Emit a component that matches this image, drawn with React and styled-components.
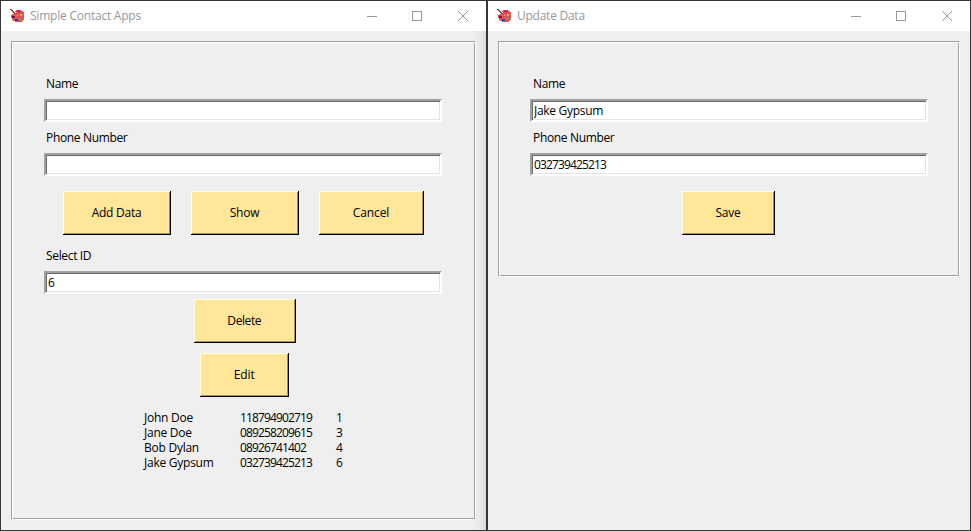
import React from "react";
import styled, { createGlobalStyle } from "styled-components";

const GlobalStyle = createGlobalStyle`
  *, *::before, *::after { box-sizing: border-box; }
  body { margin: 0; background: #353535; overflow: hidden; }
  body, input, button { font: 12px/16px "Open Sans", "Noto Sans", sans-serif; color: #000; }
`;

const Desktop = styled.main`
  width: 971px;
  height: 531px;
  padding: 1px;
  display: flex;
  gap: 2px;
  background: #353537;
`;

const Window = styled.section`
  width: ${(p) => p.$width}px;
  height: 529px;
  background: linear-gradient(to left, ${(p) => (p.$shaded ? "#d9d9d9, #e7e7e7 5px, #efefef 12px" : "#efefef, #efefef")});
`;

const TitleBar = styled.header`
  height: 30px;
  display: flex;
  align-items: center;
  padding-left: 8px;
  background: #fff;
`;

const Title = styled.h1`
  margin: 0 auto 0 5px;
  font-size: 12px;
  font-weight: 400;
  line-height: 16px;
  letter-spacing: ${(p) => p.$spacing}px;
  color: #999;
  white-space: nowrap;
`;

const Controls = styled.svg`
  display: block;
  width: 104px;
  height: 12px;
  margin-right: 16px;
`;

const Frame = styled.div`
  width: ${(p) => p.$width}px;
  height: ${(p) => p.$height}px;
  margin: 10px 0 0 10px;
  padding: 34px 0 0 ${(p) => p.$inset}px;
  border: 1px solid;
  border-color: #a0a0a0 #fff #fff #a0a0a0;
  box-shadow: inset 1px 1px #fff, inset -1px -1px #a0a0a0;
`;

const Label = styled.label`
  display: block;
  height: 16px;
  margin: ${(p) => p.$top || 0}px 0 7px ${(p) => p.$left || 2}px;
  letter-spacing: -0.34px;
`;

const Entry = styled.input`
  display: block;
  width: 398px;
  height: 23px;
  padding: 0 0 0 2px;
  border: 2px solid;
  border-color: #a0a0a0 #fff #fff #a0a0a0;
  border-radius: 0;
  outline: 0;
  background: #fff;
  box-shadow: inset 1px 1px #696969, inset -1px -1px #e3e3e3;
  letter-spacing: ${(p) => p.$spacing || 0}px;
`;

const ButtonRow = styled.div`
  display: flex;
  gap: 20px;
  margin: 15px 0 0 ${(p) => p.$left}px;
`;

const ButtonStack = styled.div`
  width: 398px;
  display: flex;
  flex-direction: column;
  align-items: center;
  gap: 10px;
  margin: 5px 0 0 1.75px;
`;

const Button = styled.button`
  width: ${(p) => p.$width}px;
  height: 44px;
  padding: 0 1px 1px 0;
  border: 0;
  background: #ffe699;
  box-shadow: inset -1px -1px #000, inset 1px 1px #ffffe0, inset -2px -2px #a0905f;
  letter-spacing: ${(p) => p.$spacing || 0}px;
`;

const Records = styled.div`
  display: grid;
  grid-template-columns: 96px 96px auto;
  grid-auto-rows: 15px;
  margin: 13px 0 0 100px;
  line-height: 15px;
`;

const Cell = styled.span`
  letter-spacing: ${(p) => p.$spacing}px;
  white-space: nowrap;
`;

const Palette = () => (
  <svg width="16" height="16" viewBox="0 0 16 16" shapeRendering="crispEdges" aria-hidden="true">
    <path fill="#dc565c" d="M7 2h5v1h2v1h1v8h-1v1h-1v1h-7v-1h-2v-1h-1v-2h-1V7h1V6h3V5h1V4H6V3h1z" />
    <path fill="#e02050" d="M8 2h4v2h-1v1H9V4H8z" />
    <path fill="#efac35" d="M11 6h2v2h-2z" />
    <path fill="#74a533" d="M11 10h2v2h-2z" />
    <path fill="#174fae" d="M6 11h3v2H6z" />
    <path fill="#70183e" d="M3 8h3v2H3z" />
    <path fill="#b8c4d6" d="M8 7h1v1H8z" />
    <path fill="#7d3517" d="M1 1h1v1h1v1h1v1h1v1h1v1H5V5H4V4H3V3H2V2H1z" />
    <path fill="#b85a28" d="M2 1h1v1h1v1h1v1h1v1h1v1H6V5H5V4H4V3H3V2H2z" />
  </svg>
);

const WindowControls = () => (
  <Controls viewBox="0 0 104 12" fill="none" stroke="#999">
    <path d="M1 6.5h10M46.500 1.500h9v9h-9z" shapeRendering="crispEdges" />
    <path d="M92 1l10 10M102 1L92 11" />
  </Controls>
);

const contacts = [
  { id: 1, name: "John Doe", phone: "118794902719" },
  { id: 3, name: "Jane Doe", phone: "089258209615" },
  { id: 4, name: "Bob Dylan", phone: "08926741402" },
  { id: 6, name: "Jake Gypsum", phone: "032739425213" },
];

export default function App() {
  return (
    <>
      <GlobalStyle />
      <Desktop>
        <Window $width={485} $shaded>
          <TitleBar>
            <Palette />
            <Title $spacing={-0.22}>Simple Contact Apps</Title>
            <WindowControls />
          </TitleBar>
          <Frame $width={465} $height={479} $inset={32}>
            <Label>Name</Label>
            <Entry defaultValue="" />
            <Label $top={8}>Phone Number</Label>
            <Entry defaultValue="" />
            <ButtonRow $left={19}>
              <Button $width={108} $spacing={-0.25}>Add Data</Button>
              <Button $width={108} $spacing={-0.2}>Show</Button>
              <Button $width={105} $spacing={-0.1}>Cancel</Button>
            </ButtonRow>
            <Label $top={13}>Select ID</Label>
            <Entry defaultValue="6" />
            <ButtonStack>
              <Button $width={102} $spacing={-0.4}>Delete</Button>
              <Button $width={89} $spacing={-0.1}>Edit</Button>
            </ButtonStack>
            <Records>
              {contacts.map((c) => (
                <React.Fragment key={c.id}>
                  <Cell $spacing={-0.25}>{c.name}</Cell>
                  <Cell $spacing={-0.86}>{c.phone}</Cell>
                  <Cell $spacing={0}>{c.id}</Cell>
                </React.Fragment>
              ))}
            </Records>
          </Frame>
        </Window>
        <Window $width={482}>
          <TitleBar>
            <Palette />
            <Title $spacing={-0.25}>Update Data</Title>
            <WindowControls />
          </TitleBar>
          <Frame $width={462} $height={236} $inset={31}>
            <Label $left={3}>Name</Label>
            <Entry defaultValue="Jake Gypsum" $spacing={-0.3} />
            <Label $top={8} $left={3}>Phone Number</Label>
            <Entry defaultValue="032739425213" $spacing={-0.86} />
            <ButtonRow $left={152}>
              <Button $width={93} $spacing={-0.25}>Save</Button>
            </ButtonRow>
          </Frame>
        </Window>
      </Desktop>
    </>
  );
}
